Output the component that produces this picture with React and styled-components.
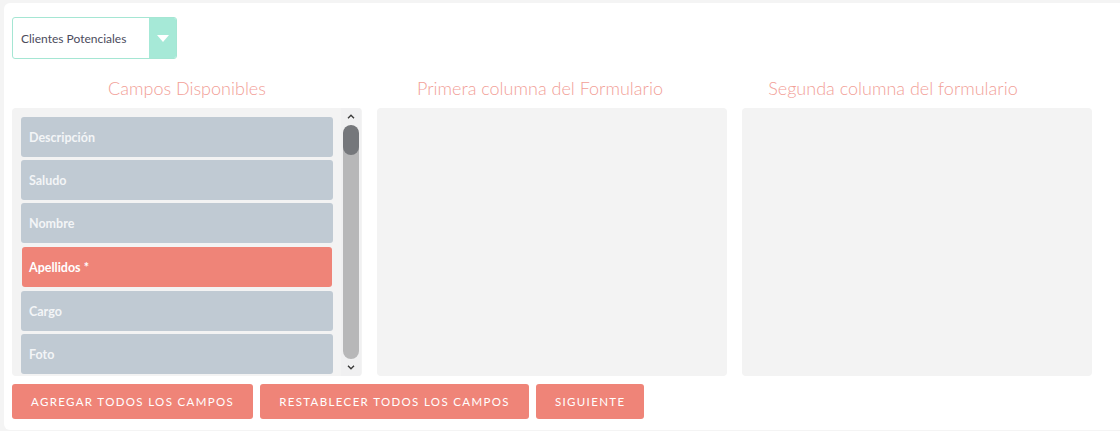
import React from "react";
import styled, { createGlobalStyle } from "styled-components";

const GlobalStyle = createGlobalStyle`
  body {
    margin: 0;
    background: #f4f4f4;
    font-family: Lato, "Open Sans", sans-serif;
  }
`;

const Card = styled.div`
  margin: 3px 0 0 4px;
  background: #fff;
  border-radius: 6px 0 0 6px;
  padding: 14px 8px 11px 8px;
  height: 427px;
  box-sizing: border-box;
`;

const Select = styled.div`
  display: flex;
  width: 165px;
  height: 42px;
  box-sizing: border-box;
  border: 1px solid #a5e6d3;
  border-radius: 3px;
  overflow: hidden;
`;

const SelectLabel = styled.div`
  flex: 1;
  display: flex;
  align-items: center;
  padding-left: 8px;
  font-size: 12px;
  color: #4b4b5c;
`;

const SelectButton = styled.div`
  width: 27px;
  background: #a6e9d7;
  display: flex;
  align-items: center;
  justify-content: center;
  &::after {
    content: "";
    border-left: 6px solid transparent;
    border-right: 6px solid transparent;
    border-top: 7px solid #fff;
  }
`;

const Columns = styled.div`
  display: grid;
  grid-template-columns: repeat(3, 350px);
  column-gap: 15px;
  margin-top: 18px;
`;

const Column = styled.div`
  display: flex;
  flex-direction: column;
`;

const Heading = styled.h3`
  margin: 0 ${p => p.$shift || 0}px 9px 0;
  height: 22px;
  line-height: 22px;
  text-align: center;
  white-space: nowrap;
  font-weight: 300;
  font-size: 18px;
  color: #f2a097;
`;

const Box = styled.div`
  height: 268px;
  background: #f3f3f3;
  border-radius: 4px;
  display: flex;
  overflow: hidden;
`;

const List = styled.div`
  flex: 1;
  padding: 9px 8px 0 9px;
  overflow: hidden;
  display: flex;
  flex-direction: column;
  gap: 3px;
`;

const Item = styled.div`
  flex: none;
  height: 40px;
  margin: ${p => (p.$active ? "1px" : "0")};
  border-radius: 3px;
  background: ${p => (p.$active ? "#ef8478" : "#c0cad3")};
  color: ${p => (p.$active ? "#fff" : "#f3f5f7")};
  font-size: 12.5px;
  font-weight: 700;
  display: flex;
  align-items: center;
  padding-left: ${p => (p.$active ? "7px" : "8px")};
`;

const Scroll = styled.div`
  width: 20px;
  margin-right: 1px;
  background: #f0f0f1;
  display: flex;
  flex-direction: column;
  align-items: center;
`;

const Arrow = styled.div`
  height: 17px;
  display: flex;
  align-items: center;
  justify-content: center;
`;

const Track = styled.div`
  flex: 1;
  width: 16px;
  background: #b7b7b8;
  border-radius: 8px;
  overflow: hidden;
`;

const Thumb = styled.div`
  height: 30px;
  background: #75777b;
  border-radius: 8px;
`;

const Buttons = styled.div`
  display: flex;
  gap: 7px;
  margin-top: 8px;
`;

const Button = styled.button`
  height: 35px;
  padding: 0 19px;
  border: none;
  border-radius: 3px;
  background: #ef8478;
  color: #fff;
  font-family: Lato, sans-serif;
  font-size: 11.5px;
  letter-spacing: 1.35px;
  text-transform: uppercase;
`;

const Chevron = ({ up }) => (
  <svg width="8" height="5" viewBox="0 0 8 5">
    <path
      d={up ? "M1 4.2 L4 1.2 L7 4.2" : "M1 0.8 L4 3.8 L7 0.8"}
      fill="none"
      stroke="#3a3a3a"
      strokeWidth="1.4"
    />
  </svg>
);

const fields = ["Descripción", "Saludo", "Nombre", "Apellidos *", "Cargo", "Foto"];

export default function App() {
  return (
    <Card>
      <GlobalStyle />
      <Select>
        <SelectLabel>Clientes Potenciales</SelectLabel>
        <SelectButton />
      </Select>
      <Columns>
        <Column>
          <Heading>Campos Disponibles</Heading>
          <Box>
            <List>
              {fields.map(f => (
                <Item key={f} $active={f === "Apellidos *"}>
                  {f}
                </Item>
              ))}
            </List>
            <Scroll>
              <Arrow>
                <Chevron up />
              </Arrow>
              <Track>
                <Thumb />
              </Track>
              <Arrow>
                <Chevron />
              </Arrow>
            </Scroll>
          </Box>
        </Column>
        <Column>
          <Heading $shift={24}>Primera columna del Formulario</Heading>
          <Box />
        </Column>
        <Column>
          <Heading $shift={48}>Segunda columna del formulario</Heading>
          <Box />
        </Column>
      </Columns>
      <Buttons>
        <Button>Agregar todos los campos</Button>
        <Button>Restablecer todos los campos</Button>
        <Button>Siguiente</Button>
      </Buttons>
    </Card>
  );
}
